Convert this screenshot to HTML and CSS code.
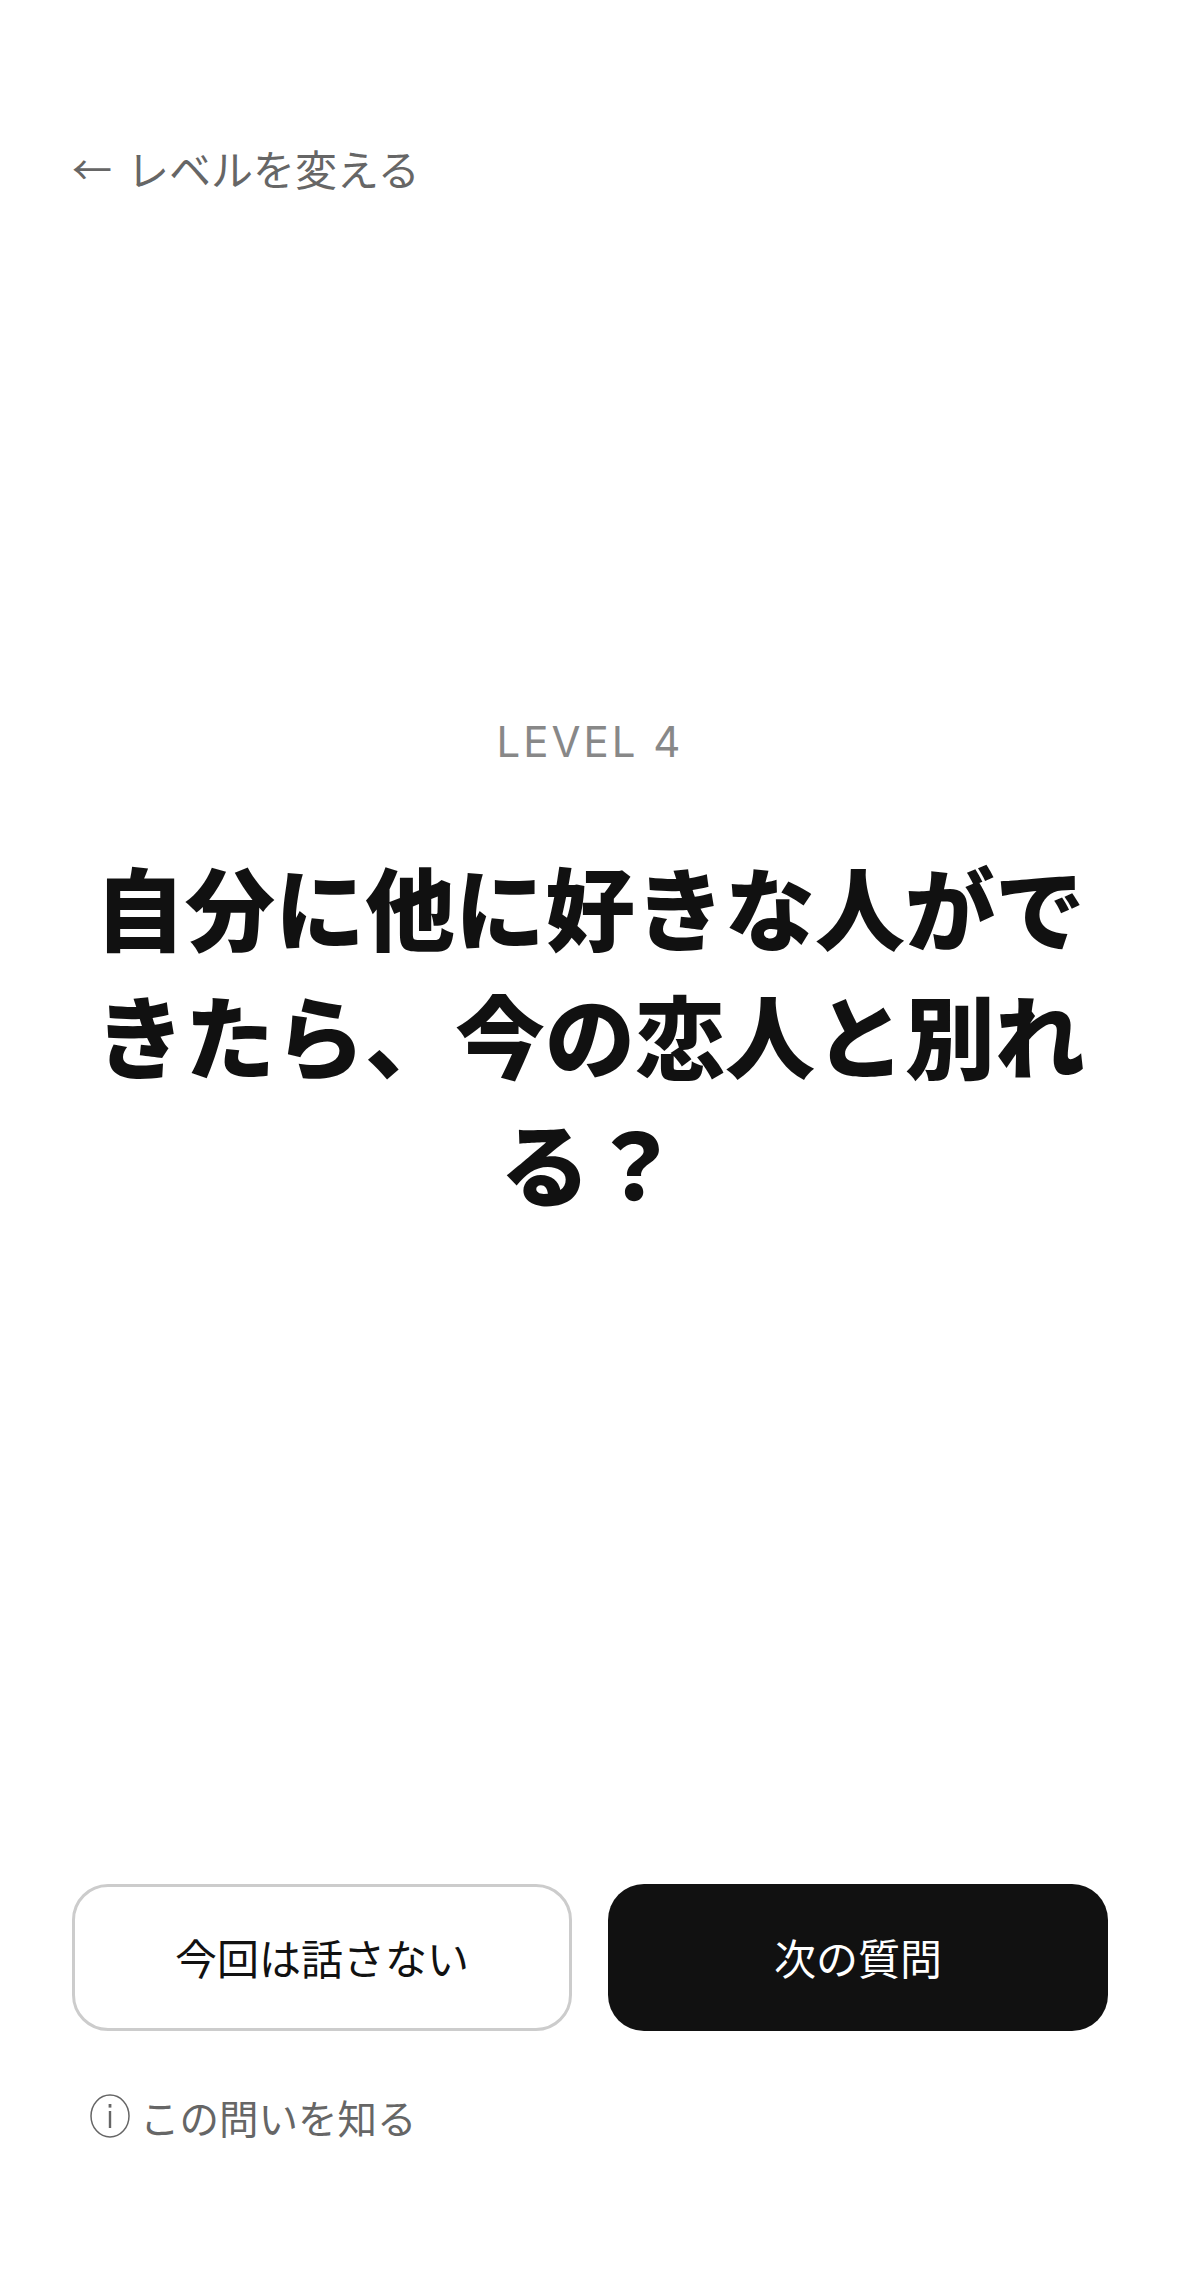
FILE: index.html
```html
<!DOCTYPE html>
<html lang="ja">
<head>
    <meta charset="UTF-8">
    <meta name="viewport" content="width=device-width, initial-scale=1.0">
    <title>LEVEL 4</title>
    <link rel="stylesheet" href="styles.css">
</head>
<body>
    <div class="page">
        <a class="back-link" href="#"><span class="back-arrow">←</span>レベルを変える</a>

        <div class="question">
            <p class="level">LEVEL 4</p>
            <h1 class="question-text">自分に他に好きな人ができたら、今の恋人と別れる？</h1>
        </div>

        <div class="actions">
            <button class="btn btn-skip">今回は話さない</button>
            <button class="btn btn-next">次の質問</button>
        </div>

        <a class="info-link" href="#">
            <svg class="info-icon" viewBox="0 0 40 44" width="40" height="44" aria-hidden="true">
                <ellipse cx="20" cy="22" rx="19" ry="21" fill="none" stroke="#666" stroke-width="1.5"/>
                <rect x="18.6" y="10" width="2.8" height="3.6" fill="#666"/>
                <rect x="18.8" y="17" width="2.4" height="17" fill="#666"/>
            </svg>
            この問いを知る
        </a>
    </div>
</body>
</html>
```

FILE: styles.css
```css
* {
    margin: 0;
    padding: 0;
    box-sizing: border-box;
}

html, body {
    width: 100%;
    height: 100%;
    background-color: #fff;
}

body {
    font-family: "Noto Sans CJK JP", "Noto Sans", sans-serif;
    color: #111;
}

.page {
    display: flex;
    flex-direction: column;
    height: 2269px;
    padding: 0 71px 0 72px;
    overflow: hidden;
}

a {
    text-decoration: none;
}

.back-link {
    display: flex;
    align-items: center;
    margin-top: 139px;
    font-size: 42px;
    line-height: 58px;
    color: #666;
}

.back-arrow {
    margin-right: 15px;
    font-size: 40px;
}

.question {
    flex: 1;
    padding-top: 517px;
    text-align: center;
}

.level {
    font-family: "Inter", "Noto Sans", sans-serif;
    font-size: 42px;
    line-height: 56px;
    letter-spacing: 3px;
    color: #888;
}

.question-text {
    margin-top: 71px;
    font-size: 90px;
    font-weight: 900;
    line-height: 128px;
}

.actions {
    display: grid;
    grid-template-columns: 1fr 1fr;
    gap: 36px;
}

.btn {
    height: 147px;
    padding-bottom: 3px;
    border-radius: 36px;
    font-family: inherit;
    font-size: 42px;
}

.btn-skip {
    background-color: #fff;
    border: 3px solid #ccc;
    color: #111;
}

.btn-next {
    background-color: #111;
    border: none;
    color: #fff;
}

.info-link {
    display: flex;
    align-items: center;
    gap: 10px;
    height: 60px;
    margin: 55px 0 123px 18px;
    font-size: 39.5px;
    color: #666;
}
```
